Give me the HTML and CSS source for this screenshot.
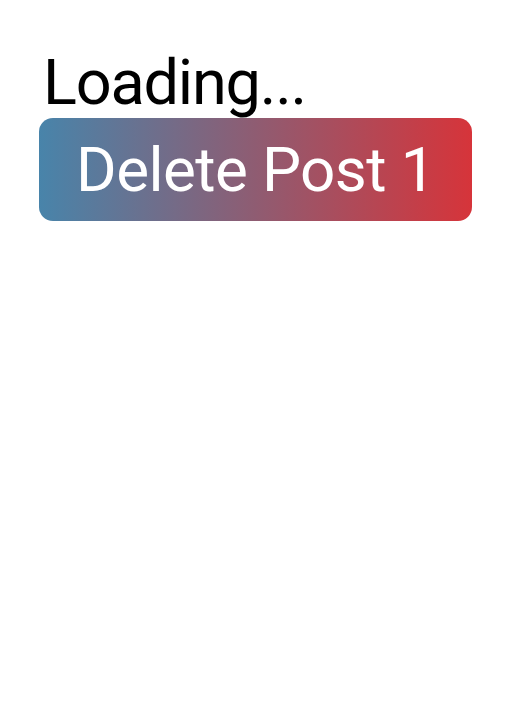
FILE: index.html
```html
<!DOCTYPE html>
<html lang="en">
<head>
    <meta charset="UTF-8">
    <meta name="viewport" content="width=device-width, initial-scale=1.0">
    <title>Posts</title>
    <link rel="stylesheet" href="styles.css">
</head>
<body>
    <div class="container">
        <div class="status">Loading...</div>
        <button class="delete-btn">Delete Post 1</button>
    </div>
</body>
</html>
```

FILE: styles.css
```css
body {
    font-family: Roboto, "Noto Sans", sans-serif;
    margin: 0;
    background-color: #fff;
}
.container {
    display: flex;
    flex-direction: column;
    align-items: flex-start;
    padding: 48px 39px 0;
}
.status {
    font-size: 63px;
    line-height: 70px;
    letter-spacing: -1.2px;
    color: #000;
    padding-left: 4px;
}
.delete-btn {
    font-family: inherit;
    font-size: 62px;
    letter-spacing: -0.6px;
    color: #fff;
    width: 433px;
    height: 103px;
    border: none;
    border-radius: 14px;
    background: linear-gradient(to right, #4884aa, #d6343a);
    cursor: pointer;
}
```
